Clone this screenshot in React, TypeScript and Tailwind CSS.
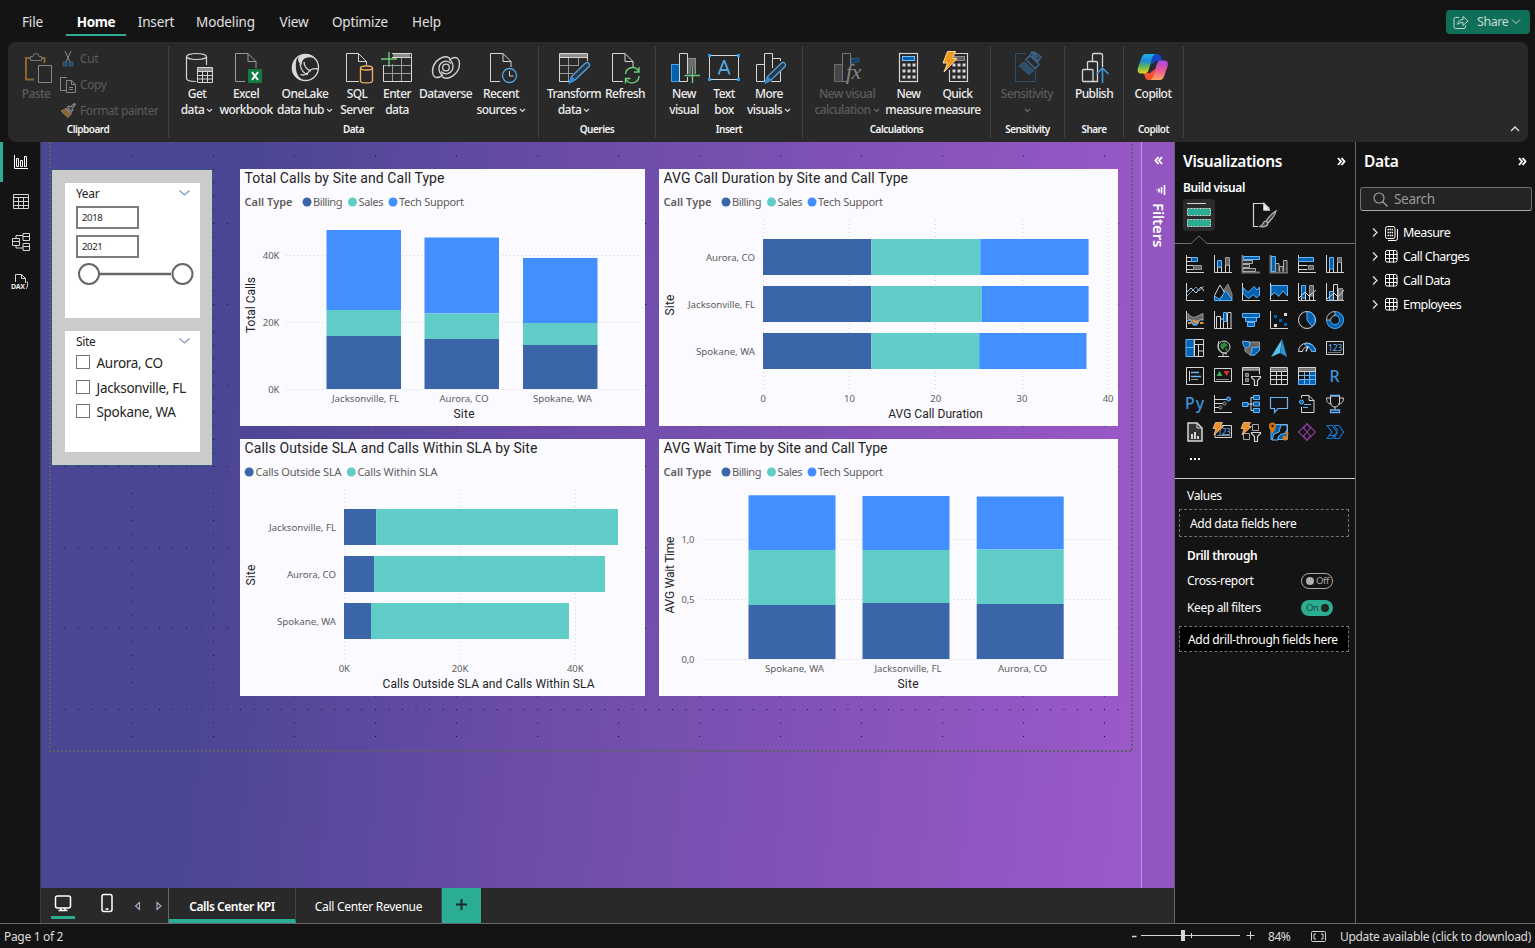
import React from "react";

type Kids = { children?: React.ReactNode };

/* ---------- icon helpers ---------- */

const Ic = ({ children, s = 32 }: Kids & { s?: number }) => (
  <svg width={s} height={s} viewBox={`0 0 ${s} ${s}`} fill="none" stroke="#d6d6d6" strokeWidth="1" className="block shrink-0 overflow-visible">
    {children}
  </svg>
);

const Caret = ({ c = "#d6d6d6" }: { c?: string }) => (
  <svg width="7" height="5" viewBox="0 0 7 5" fill="none" stroke={c} strokeWidth="1.2" className="ml-0.5 inline-block align-middle">
    <path d="M1 1l2.5 2.5L6 1" />
  </svg>
);

const icons = {
  paste: (
    <Ic>
      <path d="M14 27.500H6V6H10M21 6h3.500V11" stroke="#8a6530" strokeWidth="2" />
      <path d="M10.500 8.500V4.500h2.500a3 3 0 0 1 6 0h2.500v4z" stroke="#767676" />
      <path d="M18.500 13.500h13v17h-13z" stroke="#868686" />
    </Ic>
  ),
  getData: (
    <Ic>
      <ellipse cx="15.500" cy="4.500" rx="10" ry="3" strokeWidth="1.200" />
      <path d="M5.500 4.500v22c0 2 4 3 9.500 3M25.500 4.500V13" strokeWidth="1.200" />
      <path d="M17 17.500h14" strokeWidth="3" stroke="#8d8d8d" />
      <path d="M16.500 15.500h15v15h-15zM16.500 19.500h15M16.500 23.500h15M16.500 27h15M21.500 19v12M26.500 19v12" />
    </Ic>
  ),
  excel: (
    <Ic>
      <path d="M15 29.500H5.500V1.500H18l8 8V16M18 1.500V9.500H26" stroke="#9a9a9a" />
      <rect x="18" y="17" width="14" height="14" fill="#107c41" stroke="none" />
      <path d="M22 20l6 8M28 20l-6 8" stroke="#fff" strokeWidth="2" />
    </Ic>
  ),
  oneLake: (
    <Ic>
      <circle cx="16.500" cy="15.500" r="13" strokeWidth="1.300" />
      <path d="M8 6C2 11 1 19 6 24.500c3 3 6 4 9 4-4-2-6-4-7.500-8.500C6.500 15 6.500 11 8 6z" fill="#d9d9d9" stroke="none" />
      <path d="M9 6.500C13 1 21 1 25 6c-5-1.500-9-.5-11 2-1 1.500-1.500 3-1 5C10 12 9 9 9 6.500z" fill="#d9d9d9" stroke="none" />
      <path d="M11 12c1 6 3 9.500 8 10.500M29.500 17c-5-1-8 0-10 3-2 3-5 3.500-8 2.500M15 10c0 4 3 8 7 9" strokeWidth="1.300" />
    </Ic>
  ),
  sql: (
    <Ic>
      <path d="M18 29.500H5.500V1.500H17.500l8 8V13M17.500 1.500V9.500H25.500" />
      <ellipse cx="25.500" cy="16" rx="6" ry="2" stroke="#f5b267" strokeWidth="1.300" />
      <path d="M19.500 16v13c0 2.500 12 2.500 12 0V16" stroke="#f5b267" strokeWidth="1.300" />
    </Ic>
  ),
  enter: (
    <Ic>
      <path d="M12 3.500h17" strokeWidth="3" stroke="#8d8d8d" />
      <path d="M11 1.500h19.500v28h-28V13M11 5.500h19.500" />
      <path d="M3 13.500h27M3 21.500h27M11.500 12v17M20.500 6v23" stroke="#9a9a9a" />
      <path d="M0 7h16M8 0v15" stroke="#6ccb7a" strokeWidth="1.400" />
    </Ic>
  ),
  dataverse: (
    <Ic>
      <path d="M20 6.500C15 2 3 8 2.500 19c0 4 2 6.500 4.500 6.500 2 0 4-1 5.500-2.500" strokeWidth="1.400" />
      <path d="M12 24.500C17 29 29 23 29.500 12c0-4-2-6.500-4.500-6.500-2 0-4 1-5.500 2.500" strokeWidth="1.400" />
      <path d="M21 11.500c-5-5-12-1-12 5 0 4 2 6 4 7M11 19.500c5 5 12 1 12-5 0-4-2-6-4-7" strokeWidth="1.300" />
      <circle cx="16" cy="15.500" r="3.300" strokeWidth="1.300" />
    </Ic>
  ),
  recent: (
    <Ic>
      <path d="M15 29.500H5.500V1.500H18l8 8V15M18 1.500V9.500H26" />
      <circle cx="24.500" cy="23.500" r="7" stroke="#55a5e0" strokeWidth="1.300" fill="#292929" />
      <path d="M24.500 19v5h4" />
    </Ic>
  ),
  transform: (
    <Ic>
      <path d="M2 3.500h27" strokeWidth="3" stroke="#8d8d8d" />
      <path d="M13 29.500H1.500v-28h28V9M1.500 5.500h28" />
      <path d="M2 13.500h19M2 21.500h13M10.500 6v23M20.500 6v8" stroke="#9a9a9a" />
      <path d="M27.500 11a2.500 2.500 0 0 1 3.500 3.500L17 28l-5.500 3 2-6.500z" stroke="#55a5e0" strokeWidth="1.300" fill="#293746" />
      <path d="M14 25l3 3-5.500 3z" fill="#2f8be0" stroke="#2f8be0" />
    </Ic>
  ),
  refresh: (
    <Ic>
      <path d="M14 29.500H3.500V1.500H16l8 8V15M16 1.500V9.500H24" />
      <path d="M16.500 22a7 7 0 0 1 13-3M30 15v5h-5M30 24a7 7 0 0 1-13 3.500M16.500 31.500v-5h5" stroke="#6ccb7a" strokeWidth="1.400" />
    </Ic>
  ),
  newVisual: (
    <Ic>
      <rect x="19.500" y="6.500" width="8" height="18" fill="#6b6b6b" stroke="#8d8d8d" />
      <rect x="3.500" y="12.500" width="8" height="17" fill="#0063b1" stroke="#4ba0e8" />
      <path d="M11.500 29.500v-28h8v28z" fill="#292929" />
      <path d="M16.500 23.500h15.500M24.500 15v16" stroke="#292929" strokeWidth="3" />
      <path d="M16.500 23.500h15.500M24.500 15v16" stroke="#6ccb7a" strokeWidth="1.400" />
    </Ic>
  ),
  textBox: (
    <Ic>
      <path d="M1.500 3.500h29v24h-29z" />
      <path d="M0 2h3v3H0zM29 2h3v3h-3zM0 26h3v3H0zM29 26h3v3h-3z" fill="#2f9be8" stroke="none" />
      <path d="M10.500 22.500L15.800 9h.6l5.300 13.500M12.500 18h7.200" stroke="#55a5e0" strokeWidth="1.900" />
    </Ic>
  ),
  moreVisuals: (
    <Ic>
      <path d="M11.500 29.500v-17h-8v17h8zM11.500 12.500v-11h8V16M20 6.500h7.500V9M27.500 18v11.500H18" />
      <path d="M28.500 11a2.500 2.500 0 0 1 3.500 3.500L18 28l-5.500 3 2-6.500z" stroke="#55a5e0" strokeWidth="1.300" fill="#293746" />
      <path d="M15 25l3 3-5.500 3z" fill="#2f8be0" stroke="#2f8be0" />
    </Ic>
  ),
  newCalc: (
    <Ic>
      <rect x="3.500" y="12.500" width="8" height="17" fill="#464646" stroke="#6a6a6a" />
      <path d="M20.500 14V6.500H28V10h-4z" fill="#143e62" stroke="#2d597c" />
      <path d="M16 29.500h-4.500v-28h8v13" stroke="#777" />
      <text x="15" y="27" fill="#858585" stroke="none" className="text-[22px] italic" fontFamily="Liberation Serif, serif">fx</text>
    </Ic>
  ),
  newMeasure: (
    <Ic>
      <rect x="6.500" y="1.500" width="18" height="28" strokeWidth="1.200" />
      <rect x="9.500" y="4.500" width="12" height="4" fill="#0063b1" stroke="#7cbef5" />
      <path d="M9.500 13h13M9.500 19h13M9.500 25h13" strokeWidth="3" strokeDasharray="3 2" />
    </Ic>
  ),
  quick: (
    <Ic>
      <path d="M13 1.500h12.500v28h-18V18" strokeWidth="1.200" />
      <rect x="12.500" y="4.500" width="10" height="4" fill="#5d5d5d" stroke="#8d8d8d" />
      <path d="M10.500 13h13M10.500 19h13M10.500 25h13" strokeWidth="3" strokeDasharray="3 2" />
      <path d="M5.500-.500h8L10.500 6.500h4.500L2 20l3.500-9H1z" fill="#ee9a1c" stroke="#ffd9a0" />
    </Ic>
  ),
  sensitivity: (
    <Ic>
      <path d="M15 1.500H4.500v28h20V17" stroke="#2d516d" />
      <path d="M8 14l5-4.500 10 9-5 4.500z" fill="#2d4e68" stroke="#3a6487" strokeDasharray="2 1" />
      <path d="M15 7.500l4-4 9 9-4 4zM18 5l3-5 6 6M23 0l7 5-3 4-5-5z" stroke="#3a6487" strokeWidth="1.600" />
    </Ic>
  ),
  publish: (
    <Ic>
      <path d="M4.500 18.500q0-1 1-1h8.500q1 0 1 1v11H5.500q-1 0-1-1z" strokeWidth="1.300" />
      <path d="M9.500 17v-6.500q0-1 1-1h7.500q1.500 0 1.500 1v19H15M14.500 9V3q0-1.500 1.500-1.500h6.500q2 0 2 1.500v12" strokeWidth="1.300" />
      <path d="M24.500 31V16M18.500 22l6-6 6 6" stroke="#3f9fe0" strokeWidth="1.500" />
    </Ic>
  ),
  copilot: (
    <svg width="32" height="32" viewBox="0 0 32 32" className="block shrink-0">
      <defs>
        <linearGradient id="ca" x1="0" y1="0" x2="0" y2="1">
          <stop offset="0" stopColor="#19b5e8" />
          <stop offset=".35" stopColor="#1d86d8" />
          <stop offset=".65" stopColor="#5fb85c" />
          <stop offset="1" stopColor="#f2cf1b" />
        </linearGradient>
        <linearGradient id="cb" x1="0" y1="0" x2="0" y2="1">
          <stop offset="0" stopColor="#a348e8" />
          <stop offset=".5" stopColor="#ee5697" />
          <stop offset="1" stopColor="#fda45a" />
        </linearGradient>
      </defs>
      <path d="M14 2h6.500c2 0 3 1 3.500 3l1 4h-6L14 13z" fill="#1547c4" />
      <path d="M17 28h-5.500c-2 0-3-1-3.500-3l-1-4h6l5-4z" fill="#f0532d" />
      <path d="M9 2h9.500c-3 1-3.500 4-4.500 8l-2.500 8.500c-.8 2-2 3-4 3H4c-3 0-4-2.500-3-6l3-8.500c1-3 2-5 5-5z" fill="url(#ca)" />
      <path d="M22.500 28H13c3-1 3.500-4 4.500-8L20 11.500c.8-2 2-3 4-3h3.500c3 0 4 2.500 3 6L27.500 23c-1 3-2 5-5 5z" fill="url(#cb)" />
    </svg>
  ),
};

/* ---------- ribbon ---------- */

type ItemProps = { icon: React.ReactNode; w: string; a: string; b?: string; caret?: boolean; off?: boolean };

const Item = ({ icon, w, a, b, caret, off }: ItemProps) => (
  <div className={`flex shrink-0 flex-col items-center tracking-[-0.035em] ${w} ${off ? "text-[#5c5c5c]" : "text-[#ededed]"}`}>
    {icon}
    <div className="mt-[2px] whitespace-nowrap text-center text-[12px] leading-4 font-medium">
      <div>{a}</div>
      <div>
        {b}
        {caret && <Caret c={off ? "#6f6f6f" : "#d6d6d6"} />}
      </div>
    </div>
  </div>
);

const Group = ({ label, w, pad, children }: Kids & { label: string; w: string; pad: string }) => (
  <div className={`flex h-[92px] shrink-0 flex-col border-r border-[#404040] ${w}`}>
    <div className={`flex h-[75px] pt-[6px] ${pad}`}>{children}</div>
    <div className="text-center text-[10px] leading-[17px] font-semibold tracking-[-0.05em] text-[#f5f5f5]">{label}</div>
  </div>
);

const Small = ({ icon, t }: { icon: React.ReactNode; t: string }) => (
  <div className="flex h-[26px] shrink-0 items-center gap-1">
    {icon}
    <span className="text-[12px] leading-4 tracking-[-0.035em] text-[#5c5c5c]">{t}</span>
  </div>
);

const Ribbon = () => (
  <div className="mr-[7px] ml-2 flex h-[100px] rounded-lg bg-[#292929] pt-1">
    <Group label="Clipboard" w="w-[161px]" pad="pl-[12px]">
      <Item icon={icons.paste} w="w-[32px]" a="Paste" off />
      <div className="-mt-[6px] ml-2 flex flex-col">
        <Small
          t="Cut"
          icon={
            <svg width="16" height="18" viewBox="0 0 16 18" fill="none" stroke="#8a8a8a">
              <path d="M5 1l5 11M11 1L6 12" />
              <path d="M3.500 12.500h3v3h-3zM9.500 12.500h3v3h-3z" stroke="#2f5f85" strokeWidth="1.500" />
            </svg>
          }
        />
        <Small
          t="Copy"
          icon={
            <svg width="16" height="18" viewBox="0 0 16 18" fill="none" stroke="#868686">
              <path d="M6 14.500H.500V1.500H7M6.500 4.500h5l4 4v8h-9zM11.500 4.500v4h4M9 11.500h4M9 13.500h4" />
            </svg>
          }
        />
        <Small
          t="Format painter"
          icon={
            <svg width="16" height="16" viewBox="0 0 16 16" fill="none" stroke="#868686">
              <path d="M1 8l5-2.500 5.500 5L8 14.500z" fill="#8a6530" stroke="#8a7a60" />
              <path d="M7.500 4.500L9 3l1.500 1L14.500.500l1 1L12 5.500l1 1.500-1.500 1.500z M6 5.500l5.500 5" strokeWidth="1.200" />
            </svg>
          }
        />
      </div>
    </Group>
    <Group label="Data" w="w-[370px]" pad="pl-[6px]">
      <Item icon={icons.getData} w="w-[44px]" a="Get" b="data" caret />
      <Item icon={icons.excel} w="w-[54px]" a="Excel" b="workbook" />
      <Item icon={icons.oneLake} w="w-[64px]" a="OneLake" b="data hub" caret />
      <Item icon={icons.sql} w="w-[40px]" a="SQL" b="Server" />
      <Item icon={icons.enter} w="w-[40px]" a="Enter" b="data" />
      <Item icon={icons.dataverse} w="w-[57px]" a="Dataverse" />
      <Item icon={icons.recent} w="w-[54px]" a="Recent" b="sources" caret />
    </Group>
    <Group label="Queries" w="w-[117px]" pad="pl-[8px]">
      <Item icon={icons.transform} w="w-[54px]" a="Transform" b="data" caret />
      <Item icon={icons.refresh} w="w-[48px]" a="Refresh" />
    </Group>
    <Group label="Insert" w="w-[147px]" pad="pl-[8px]">
      <Item icon={icons.newVisual} w="w-[40px]" a="New" b="visual" />
      <Item icon={icons.textBox} w="w-[40px]" a="Text" b="box" />
      <Item icon={icons.moreVisuals} w="w-[50px]" a="More" b="visuals" caret />
    </Group>
    <Group label="Calculations" w="w-[188px]" pad="pl-[6px]">
      <Item icon={icons.newCalc} w="w-[76px]" a="New visual" b="calculation" caret off />
      <Item icon={icons.newMeasure} w="w-[47px]" a="New" b="measure" />
      <Item icon={icons.quick} w="w-[51px]" a="Quick" b="measure" />
    </Group>
    <Group label="Sensitivity" w="w-[74px]" pad="pl-[6px]">
      <Item icon={icons.sensitivity} w="w-[60px]" a="Sensitivity" caret off />
    </Group>
    <Group label="Share" w="w-[59px]" pad="justify-center">
      <Item icon={icons.publish} w="w-[50px]" a="Publish" />
    </Group>
    <Group label="Copilot" w="w-[60px]" pad="justify-center pr-px">
      <Item icon={icons.copilot} w="w-[50px]" a="Copilot" />
    </Group>
    <svg width="10" height="6" viewBox="0 0 10 6" fill="none" stroke="#e0e0e0" strokeWidth="1.300" className="mt-auto mr-[8px] mb-[10px] ml-auto">
      <path d="M1 5l4-4 4 4" />
    </svg>
  </div>
);

const menus: [string, string][] = [
  ["File", "w-[21px] ml-[22px]"],
  ["Home", "w-[60px] ml-[23px]"],
  ["Insert", "w-[34px] ml-[13px]"],
  ["Modeling", "w-[59px] ml-[23px]"],
  ["View", "w-[30px] ml-[24px]"],
  ["Optimize", "w-[56px] ml-[23px]"],
  ["Help", "w-[29px] ml-[24px]"],
];

const MenuBar = () => (
  <div className="flex h-[42px] items-start pt-[9px]">
    {menus.map(([t, c]) => (
      <div key={t} className={`flex h-[27px] justify-center whitespace-nowrap text-[13.5px] leading-[26px] ${c} ${t === "Home" ? "border-b-2 border-[#2bad93] font-bold text-white tracking-[-0.03em]" : "text-[#e0e0e0] tracking-[-0.01em]"}`}>
        {t}
      </div>
    ))}
    <div className="mt-px mr-[5px] ml-auto flex h-6 w-[84px] items-center rounded bg-[#0f6f59] pl-[7px] text-[12.5px] tracking-[-0.035em] text-[#c4d9d3]">
      <svg width="16" height="16" viewBox="0 0 16 16" fill="none" stroke="#c4d9d3" className="mr-2">
        <path d="M6 3.500H2.500q-1.500 0-1.500 1.500v8q0 1.500 1.500 1.500h8.500q1.500 0 1.500-1.500v-1.500" />
        <path d="M4.500 10.500C5 7.500 7 5.500 10 5.500V2.500l5 4.500-5 4.500V8.500c-2.500 0-4 .5-5.500 2z" />
      </svg>
      Share
      <svg width="10" height="6" viewBox="0 0 10 6" fill="none" stroke="#c4d9d3" className="ml-[3px]">
        <path d="M1 .500l4 4 4-4" />
      </svg>
    </div>
  </div>
);

/* ---------- left rail ---------- */

const Rail = () => (
  <div className="flex w-[41px] shrink-0 flex-col border-r border-[#3c3c3c]">
    <div className="flex h-10 items-center border-l-[3px] border-[#2bad93] pl-[10px]">
      <Ic s={16}>
        <path d="M1.500 1v13.500H15M3.500 4.500h2v8h-2zM7.500 6.500h2v6h-2zM11.500 2.500h2v10h-2z" stroke="#fff" />
      </Ic>
    </div>
    <div className="flex h-10 items-center pl-3">
      <Ic s={18}>
        <path d="M1.500 1.500h15v14h-15zM1.500 4.500h15M1.500 8.500h15M1.500 12.500h15M6.500 4v11M11.500 4v11" />
      </Ic>
    </div>
    <div className="flex h-10 items-center pl-3">
      <Ic s={18}>
        <path d="M.500 5.500h7v7h-7zM.500 8.500h7M11 .500h6.500v7H11zM11 3.500h6.500M11 10.500h6.500v7H11zM11 13.500h6.500M4 5.500v-3h7M4 12.500V15h7" />
      </Ic>
    </div>
    <div className="flex h-10 items-center pl-[11px]">
      <Ic s={18}>
        <path d="M4.500 9V1.500h6l4 4V10M10.500 1.500v4h4M16 8.500c1 2 1 5-1 7.500" />
        <text x="0" y="16" fill="#e8e8e8" stroke="none" className="text-[7px] font-bold" textLength="13.500">DAX</text>
      </Ic>
    </div>
  </div>
);

/* ---------- charts ---------- */

const BLUE = "#3a66a9";
const TEAL = "#5fccc8";
const SKY = "#438fff";
const GREY = "#5f5d5b";
const INK = "#252423";

type TxProps = { x: number; y: number; w?: number; s: number; t: string; f?: string; a?: "start" | "middle" | "end"; bold?: boolean; din?: boolean; rot?: boolean };

const Tx = ({ x, y, w, s, t, f = GREY, a = "start", bold, din, rot }: TxProps) => (
  <text
    x={x}
    y={y}
    fill={f}
    fontSize={s}
    textLength={w}
    textAnchor={a}
    fontWeight={bold ? 600 : 400}
    fontFamily={din ? "Roboto, sans-serif" : "'Noto Sans', sans-serif"}
    transform={rot ? `rotate(-90 ${x} ${y})` : undefined}
  >
    {t}
  </text>
);

const Legend = ({ x, y }: { x: number; y: number }) => (
  <g>
    <Tx x={x} y={y + 4} w={48} s={11} t="Call Type" bold />
    <circle cx={x + 62.500} cy={y} r="4.500" fill={BLUE} />
    <Tx x={x + 68.500} y={y + 4} w={29.500} s={11} t="Billing" />
    <circle cx={x + 108} cy={y} r="4.500" fill={TEAL} />
    <Tx x={x + 114} y={y + 4} w={25} s={11} t="Sales" />
    <circle cx={x + 148.500} cy={y} r="4.500" fill={SKY} />
    <Tx x={x + 154.500} y={y + 4} w={65} s={11} t="Tech Support" />
  </g>
);

const Grid = ({ d }: { d: string }) => <path d={d} stroke="#d4d4d8" strokeDasharray="1 3" fill="none" />;

const Card = ({ vb, h, children }: Kids & { vb: string; h: string }) => (
  <div className={`bg-[#fbfaff] tracking-normal ${h}`}>
    <svg viewBox={vb} className="block h-full w-full">
      {children}
    </svg>
  </div>
);

const Bars = ({ rows, colors }: { rows: number[][]; colors: string[] }) => (
  <>
    {rows.map(([y, ...xs]) =>
      colors.map((c, i) => <rect key={`${y}-${i}`} x={xs[i]} y={y} width={xs[i + 1] - xs[i]} height={36} fill={c} />),
    )}
  </>
);

const Cols = ({ cols, w }: { cols: number[][]; w: number }) => (
  <>
    {cols.map(([x, ...ys]) =>
      [SKY, TEAL, BLUE].map((c, i) => <rect key={`${x}-${i}`} x={x} y={ys[i]} width={w} height={ys[i + 1] - ys[i]} fill={c} />),
    )}
  </>
);

const JF = "Jacksonville, FL";
const AC = "Aurora, CO";
const SW = "Spokane, WA";

const Charts = () => (
  <div className="grid grid-cols-[405px_459px] gap-x-[14px] gap-y-[13px]">
    <Card vb="240 169 405 257" h="h-[257px]">
      <Tx x={244.500} y={183} w={200} s={14} t="Total Calls by Site and Call Type" f={INK} din />
      <Legend x={244.500} y={202} />
      <Grid d="M286 255.500H640M286 322.500H640M286 389.500H640" />
      <Cols w={74.500} cols={[[326.500, 230, 310, 336, 389], [424.500, 237.500, 313.500, 339, 389], [523, 258, 323, 345, 389]]} />
      <Tx x={279.500} y={259} s={9.500} t="40K" a="end" />
      <Tx x={279.500} y={326} s={9.500} t="20K" a="end" />
      <Tx x={279.500} y={393} s={9.500} t="0K" a="end" />
      <Tx x={365.500} y={402} w={67} s={9.700} t={JF} a="middle" />
      <Tx x={464} y={402} w={49} s={9.700} t={AC} a="middle" />
      <Tx x={562.500} y={402} w={59} s={9.700} t={SW} a="middle" />
      <Tx x={464} y={418} w={21} s={12} t="Site" f={INK} a="middle" din />
      <Tx x={255} y={305} w={56} s={12} t="Total Calls" f={INK} a="middle" din rot />
    </Card>
    <Card vb="659 169 459 257" h="h-[257px]">
      <Tx x={663.500} y={183} w={244.500} s={14} t="AVG Call Duration by Site and Call Type" f={INK} din />
      <Legend x={663.500} y={202} />
      <Grid d="M763.500 220V391M849.500 220V391M935.500 220V391M1022.500 220V391M1108.500 220V391" />
      <Bars colors={[BLUE, TEAL, SKY]} rows={[[239, 763, 871.300, 980.300, 1088.600], [286, 763, 871.300, 981.800, 1088.600], [333, 763, 871.300, 979.200, 1086.500]]} />
      <Tx x={755} y={261} w={49} s={9.700} t={AC} a="end" />
      <Tx x={755} y={308} w={67} s={9.700} t={JF} a="end" />
      <Tx x={755} y={355} w={59} s={9.700} t={SW} a="end" />
      {["0", "10", "20", "30", "40"].map((t, i) => (
        <Tx key={t} x={763.300 + i * 86.200} y={402} s={9.500} t={t} a="middle" />
      ))}
      <Tx x={935.500} y={418} w={94.500} s={12} t="AVG Call Duration" f={INK} a="middle" din />
      <Tx x={674} y={305} w={21} s={12} t="Site" f={INK} a="middle" din rot />
    </Card>
    <Card vb="240 439 405 257" h="h-[257px]">
      <Tx x={244.500} y={453} w={293} s={14} t="Calls Outside SLA and Calls Within SLA by Site" f={INK} din />
      <circle cx="249.200" cy="472" r="4.500" fill={BLUE} />
      <Tx x={255.500} y={476} w={86} s={11} t="Calls Outside SLA" />
      <circle cx="351.300" cy="472" r="4.500" fill={TEAL} />
      <Tx x={357.500} y={476} w={80} s={11} t="Calls Within SLA" />
      <Grid d="M344.500 490V661M459.500 490V661M575.500 490V661" />
      <Bars colors={[BLUE, TEAL]} rows={[[509, 344, 376.300, 618], [556, 344, 374.200, 605], [603, 344, 371, 569]]} />
      <Tx x={336} y={531} w={67} s={9.700} t={JF} a="end" />
      <Tx x={336} y={578} w={49} s={9.700} t={AC} a="end" />
      <Tx x={336} y={625} w={59} s={9.700} t={SW} a="end" />
      <Tx x={344.300} y={672} s={9.500} t="0K" a="middle" />
      <Tx x={460} y={672} s={9.500} t="20K" a="middle" />
      <Tx x={575.300} y={672} s={9.500} t="40K" a="middle" />
      <Tx x={488.500} y={688} w={212} s={12} t="Calls Outside SLA and Calls Within SLA" f={INK} a="middle" din />
      <Tx x={255} y={575} w={21} s={12} t="Site" f={INK} a="middle" din rot />
    </Card>
    <Card vb="659 439 459 257" h="h-[257px]">
      <Tx x={663.500} y={453} w={224} s={14} t="AVG Wait Time by Site and Call Type" f={INK} din />
      <Legend x={663.500} y={472} />
      <Grid d="M701 539.500H1113M701 599.500H1113M701 659.500H1113" />
      <Cols w={87} cols={[[748.500, 495.300, 550, 605, 659], [862.500, 496, 550, 603, 659], [976.700, 496.500, 549.500, 604, 659]]} />
      <Tx x={694.500} y={543} w={13} s={9.500} t="1,0" a="end" />
      <Tx x={694.500} y={603} w={13} s={9.500} t="0,5" a="end" />
      <Tx x={694.500} y={663} w={13} s={9.500} t="0,0" a="end" />
      <Tx x={794.500} y={672} w={59} s={9.700} t={SW} a="middle" />
      <Tx x={908} y={672} w={67} s={9.700} t={JF} a="middle" />
      <Tx x={1022.500} y={672} w={49} s={9.700} t={AC} a="middle" />
      <Tx x={908} y={688} w={21} s={12} t="Site" f={INK} a="middle" din />
      <Tx x={674} y={575} w={77} s={12} t="AVG Wait Time" f={INK} a="middle" din rot />
    </Card>
  </div>
);

const SlicerHead = ({ t }: { t: string }) => (
  <div className="flex items-center justify-between pr-[10px] text-[12px] leading-[18px] text-[#252423]">
    {t}
    <svg width="11" height="6" viewBox="0 0 11 6" fill="none" stroke="#7c9bb5" strokeWidth="1.200" className="mb-[3px]">
      <path d="M.500.500l5 4.500 5-4.500" />
    </svg>
  </div>
);

const Slicers = () => (
  <div className="flex h-[295px] w-[160px] flex-col gap-[13px] bg-[#cbcbcb] pt-[13px] pr-[12px] pl-[13px] outline outline-[#35567d]">
    <div className="flex h-[135px] flex-col bg-white pt-[2px] pl-[11px]">
      <SlicerHead t="Year" />
      <div className="mt-[3px] h-[23px] w-[63px] border-2 border-[#7d7d7d] pl-[4px] text-[9.5px] leading-[20px] text-[#252423]">2018</div>
      <div className="mt-[6px] h-[23px] w-[63px] border-2 border-[#7d7d7d] pl-[4px] text-[9.5px] leading-[20px] text-[#252423]">2021</div>
      <svg width="119" height="24" viewBox="0 0 119 24" fill="#fff" stroke="#666" strokeWidth="2" className="mt-[4px] ml-px">
        <path d="M22 12h72" strokeWidth="2.500" />
        <circle cx="12" cy="12" r="10" />
        <circle cx="105.500" cy="12" r="10" />
      </svg>
    </div>
    <div className="flex h-[121px] flex-col bg-white pt-[2px] pl-[11px]">
      <SlicerHead t="Site" />
      {[AC, JF, SW].map((t) => (
        <div key={t} className="flex h-[24.500px] items-center whitespace-nowrap text-[13.5px] tracking-[-0.022em] text-[#252423]">
          <span className="mr-[6.500px] -mt-[2px] h-[14px] w-[14px] shrink-0 border border-[#777]" />
          {t}
        </div>
      ))}
    </div>
  </div>
);

const vLines = Array.from({ length: 13 }, (_, i) => 132.500 + i * 81);
const hLines = Array.from({ length: 7 }, (_, i) => 223.500 + i * 81);

const Canvas = () => (
  <div className="relative h-[746px] w-[1100px] shrink-0 bg-[linear-gradient(96deg,#4b4694_0%,#4b4694_18%,#6a4ba8_45%,#7550af_58%,#8b54bd_80%,#9d59ca_100%)]">
    <svg width="1100" height="746" viewBox="41 142 1100 746" className="absolute inset-0" fill="none">
      {vLines.map((x) => (
        <path key={x} d={`M${x} 155.500V740`} stroke="#161630" strokeDasharray="1 12.500" />
      ))}
      {hLines.map((y) => (
        <path key={y} d={`M64.500 ${y}H1125`} stroke="#161630" strokeDasharray="1 12.500" />
      ))}
      <path d="M50 142V751H1132V142" stroke="#5f5f66" strokeWidth="2" strokeDasharray="2 2" />
    </svg>
    <div className="relative flex gap-[28px] pt-[27px] pl-[11px]">
      <div className="pt-px"><Slicers /></div>
      <Charts />
    </div>
  </div>
);

const Filters = () => (
  <div className="flex h-[746px] w-[33px] shrink-0 flex-col items-center border-l border-[#b9a2cc] bg-[#9356c0] pt-[14px]">
    <svg width="9" height="9" viewBox="0 0 9 9" fill="none" stroke="#fff" strokeWidth="1.900">
      <path d="M4.500 1L1.500 4.500 4.500 8M8 1L5 4.500 8 8" />
    </svg>
    <svg width="10" height="10" viewBox="0 0 10 10" fill="none" stroke="#fff" strokeWidth="1.600" className="mt-[20px] ml-[6px]">
      <path d="M8.500 0v10M5.500 2v6.500M3 3.500v4M1 4.500v1" />
    </svg>
    <div className="mt-[8px] ml-px text-[15px] leading-[18px] font-semibold tracking-[-0.01em] text-white [writing-mode:vertical-rl]">Filters</div>
  </div>
);

const PageTabs = () => (
  <div className="flex h-[35px] bg-[#292929]">
    <div className="flex w-[128px] items-start border-r border-[#666] pl-[10px]">
      <div className="flex h-[31px] w-[24px] flex-col items-center justify-between border-b-[3px] border-[#2bad93] pt-[7px]">
        <svg width="18" height="17" viewBox="0 0 18 17" fill="none" stroke="#fff" strokeWidth="1.500">
          <rect x="1.500" y="1" width="15" height="12" rx="2" />
          <path d="M4.500 15.500h9M7 13v2.500M11 13v2.500" />
        </svg>
      </div>
      <svg width="12" height="20" viewBox="0 0 12 20" fill="none" stroke="#fff" strokeWidth="1.500" className="mt-[5px] ml-[26px]">
        <rect x="1" y="1.500" width="10" height="17" rx="2" />
        <path d="M4.500 16h3" />
      </svg>
      <svg width="28" height="10" viewBox="0 0 28 10" fill="none" stroke="#b5a9c9" strokeWidth="1.100" className="mt-[13px] ml-[21px]">
        <path d="M5.500 1.500L1.500 5l4 3.500zM23 1.500L27 5l-4 3.500z" />
      </svg>
    </div>
    <div className="flex w-[127px] items-center justify-center border-r border-b-4 border-r-[#444] border-b-[#2bad93] pt-[6px] text-[12px] font-semibold tracking-[-0.038em] text-white">Calls Center KPI</div>
    <div className="flex w-[146px] items-center justify-center border-r border-[#444] pt-[3px] text-[12px] tracking-[-0.025em] text-white">Call Center Revenue</div>
    <div className="flex w-[39px] items-center justify-center bg-[#2bad93]">
      <svg width="11" height="11" viewBox="0 0 11 11" stroke="#1c2b28" strokeWidth="2" className="-mt-[2px]">
        <path d="M5.500 0v11M0 5.500h11" />
      </svg>
    </div>
  </div>
);

/* ---------- visualizations pane ---------- */

const B = "#0063b1";
const L = "#69b4f5";
const G = "#666";
const W = "#d6d6d6";

const V = ({ children }: Kids) => (
  <div className="flex h-7 w-7 items-center justify-center">
    <svg width="18" height="18" viewBox="0 0 18 18" fill="none" stroke={W} className="overflow-visible">
      {children}
    </svg>
  </div>
);

const Axes = () => <path d="M.500 0v17.500H18" />;
const Bolt = () => <path d="M1.500-.5h7l-2 4h3L0 12l2-6.500h-3z" fill="#e8912d" stroke="#fbd7a5" strokeWidth=".7" />;
const Funnel = () => <path d="M9.500 9.500h9v1l-3 3v5h-3v-5l-3-3z" fill="#141414" strokeWidth="1.200" />;

const vizIcons: React.ReactNode[] = [
  <><Axes /><path d="M.500 2.500h5M.500 6.500h5M.500 10.500h7M.500 14.500h7" /><path d="M5.500 2.500h6v4h-6z" fill={B} stroke={L} /><path d="M7.500 10.500h8v4h-8z" fill={G} stroke="#999" /></>,
  <><Axes /><path d="M3.500 17v-5h4v5M11.500 17v-7h4v7" /><path d="M3.500 5.500h4v6.500h-4z" fill={B} stroke={L} /><path d="M11.500 2.500h4v7.500h-4z" fill={G} stroke="#999" /></>,
  <><path d="M.500 0v17.500H18" stroke="#777" strokeWidth="2" /><path d="M1.500 1.500h16v3h-16z" fill={B} stroke={L} /><path d="M1 5.500h9.500v3H1M1 9.500h6.500v3H1M1 13.500h12.500v3H1z" stroke="#aaa" fill="#333" /></>,
  <><path d="M.500 0v17.500H18" stroke="#777" strokeWidth="2" /><path d="M1.500 1.500h4v15h-4z" fill={B} stroke={L} /><path d="M5.500 16.500V8.500h3.500v8M9.500 16.500v-5h3.500v5M13.500 16.500v-11h3.500v11" stroke="#aaa" fill="#333" /></>,
  <><Axes /><path d="M.500 10.500h9M.500 14.500h9" /><path d="M.500 2.500h15v4h-15z" fill={B} stroke={L} /><path d="M10.500 10.500h5v4h-5z" fill={G} stroke="#999" /></>,
  <><Axes /><path d="M3.500 2.500h4v11.500h-4z" fill={B} stroke={L} /><path d="M3.500 14v3M7.500 14v3M11.500 17V7M15.500 7v10" /><path d="M11.500 2.500h4v5h-4z" fill={G} stroke="#999" /></>,
  <><Axes /><path d="M1 13l9-9 3 4 5-5" stroke="#4a9fe0" /><path d="M1 9l4-4L10 10l5-6 3 4" /></>,
  <><path d="M9 8L14 1l4 10v6.500z" fill={G} stroke="#888" /><path d="M.500 12.500L6 2l5 8-6 7H.500z" /><path d="M.500 13l5.500 3.500L11.500 7.500l6 8v2H.500z" fill={B} stroke={L} /></>,
  <><Axes /><path d="M1 4.500l5 5 6-6 3 3.500 2.500-3v8l-3 3-3-3.500-5 4-5.500-5z" fill={B} stroke={L} /></>,
  <><Axes /><path d="M1 2.500h16.500V13l-4.500-5-4.500 5.500-3.500-4-4 3z" fill={B} stroke={L} /></>,
  <><Axes /><path d="M3.500 2.500h4V15h-4z" fill={B} stroke={L} /><path d="M11.500 2.500h4V13h-4z" fill={G} stroke="#999" /><path d="M1 15l6-6 4 4 7-6M3.500 15v2M7.500 11v6M11.500 13v4M15.500 10v7" /></>,
  <><Axes /><path d="M3.500 8.500h4V17h-4z" fill={B} stroke={L} /><path d="M12.500 5.500h4V17h-4z" fill={G} stroke="#999" /><path d="M7.500 17V1.500h4V17M1 16l7-6 4 4 6-7" /></>,
  <><path d="M1 10q4-3 5 2 3 4 6 0 1-5 5.500-3" fill={B} stroke={L} strokeWidth="1.500" /><path d="M2 2.500q4 5 7.500 3.500T17 2.500v6q-4-1-6 3-2 1-3.500 0Q5 7 2 8z" fill={G} stroke="#999" /><path d="M2 12h3M14 12h3.500M7 9l3 2.500 2-2" stroke="#e8912d" strokeWidth="2.200" /><Axes /></>,
  <><Axes /><path d="M2.500 17V5.500H6.500V17M6.500 5.500V8H9.500V17M6.500 17V8" /><path d="M9.500 10.500V1.500H12.500v9z" fill={B} stroke={L} /><path d="M13.500 1.500H17V17M13.500 2v15" /></>,
  <><path d="M.500 2.500h17v4H.500zM3.500 6.500h11v4h-11zM5.500 11.500h7v4h-7z" fill={B} stroke={L} /></>,
  <><Axes /><path d="M4 4h3v3H4zM9 8h3v3H9zM14 12h3v3h-3z" fill={B} stroke="none" /><path d="M14 2h3v3h-3zM4 13h3v3H4z" fill={W} stroke="none" /></>,
  <><circle cx="9" cy="9" r="8.500" /><path d="M9 .500a8.500 8.500 0 0 1 5 15L9 9z" fill={B} stroke={L} /></>,
  <><circle cx="9" cy="9" r="6.500" stroke={L} strokeWidth="5" /><circle cx="9" cy="9" r="6.500" stroke={B} strokeWidth="3.400" /><path d="M2.500 9A6.500 6.500 0 0 1 9 2.500" stroke="#141414" strokeWidth="5" /><path d="M.500 9A8.500 8.500 0 0 1 9 .500v4A4.500 4.500 0 0 0 4.500 9z" stroke="#aaa" /></>,
  <><path d="M0 .500h8v17H0zM0 8.500h8" fill={B} stroke={L} /><path d="M8.500.500h9v17h-9zM8.500 5.500h9M12.500 5.500v12M12.500 12h5" /></>,
  <><circle cx="10" cy="8" r="6" stroke={W} /><path d="M7 5l4-2 3 4-3 1-2 3-3-3zM11 9l3 1-2 3z" fill="#2d8a3e" stroke="none" /><path d="M5 2a9 9 0 0 0 8 13M9 15v2.500M4 17.500h11" /></>,
  <><path d="M3 3h14.500v8l-5 5H8l-5-4z" fill={G} stroke="#999" /><path d="M.500 2l7 1v4l-3 2-3-2z" fill={B} stroke={L} /><path d="M10 8.500l7.500-.5v3.500l-5 4.500H8l2-4z" fill={B} stroke={L} /></>,
  <><path d="M12 0L1 18l9-4z" fill="#5cc0ee" stroke="none" /><path d="M12 0l5 18-7-4z" fill="#2f8fc7" stroke="none" /></>,
  <><path d="M.500 12.500a8.500 8.500 0 0 1 17 0h-4a4.500 4.500 0 0 0-9 0z" stroke={W} /><path d="M6 5a8.500 8.500 0 0 1 11.500 7.500h-4A4.500 4.500 0 0 0 11 9z" fill={B} stroke={L} /><path d="M8 12.500L10 7" strokeWidth="1.500" /></>,
  <><path d="M.500 2.500h17v13H.500z" /><path d="M2 13.500h13" stroke="#777" /><text x="2" y="11.500" fill={L} stroke="none" className="text-[8.5px]" textLength="14">123</text></>,
  <><path d="M.500.500h17v17H.500zM3.500 4v10" /><path d="M5 5.500h8M5 9.500h10" stroke={L} strokeWidth="1.600" /><path d="M5 12.500h7" stroke="#999" /></>,
  <><path d="M.500 1.500h17v13H.500z" /><path d="M2.500 9l3-5 3 5z" fill="#3fae4e" stroke="none" /><path d="M9.500 4h6l-3 5z" fill="#e0322b" stroke="none" /><path d="M2 12.500h13" stroke="#888" /></>,
  <><path d="M8 17.500H.500V.500h17v7" /><path d="M1 2.500h16" stroke="#999" strokeWidth="2.500" /><path d="M3.500 6.500h3v3h-3zM3.500 11.500h3v3h-3z" stroke="#999" fill={G} /><Funnel /></>,
  <><path d="M1 2.500h16" stroke="#888" strokeWidth="2.500" /><path d="M.500.500h17v17H.500zM.500 4.500h17M.500 8.500h17M.500 12.500h17M6.500 4v13M11.500 4v13" /></>,
  <><path d="M6 12h6v5.500H0V13h6zM12 4.500h5.500v13H12z" fill={B} stroke="none" /><path d="M1 2.500h16" stroke="#888" strokeWidth="2.500" /><path d="M.500.500h17v17H.500zM.500 4.500h17M.500 8.500h17M.500 12.500h17M6.500 4v13M11.500 4v13" stroke={L} /><path d="M.500 12V.500h17v4H.500" /></>,
  <text x="3.500" y="15" fill="#3a96dd" stroke="none" className="text-[16px] font-medium" textLength="9">R</text>,
  <text x="-1" y="14" fill="#3a96dd" stroke="none" className="text-[16px] font-medium" textLength="19">Py</text>,
  <><Axes /><path d="M1 4.500h12M1 8.500h8M1 12.500h4" /><circle cx="14.500" cy="4" r="2" fill={B} stroke={L} /><circle cx="10.500" cy="8.500" r="1.500" stroke="#aaa" /><circle cx="6.500" cy="12.500" r="1.500" stroke="#aaa" /></>,
  <><path d="M6 9h3M9 2.500v13M9 2.500h2.500M9 9h2.500M9 15.500h2.500" /><path d="M.500 7.500h5.500v4H.500zM11.500.500h6v4h-6zM11.500 7h6v4h-6zM11.500 13.500h6v4h-6z" fill={B} stroke={L} /></>,
  <path d="M.500 2.500h17v11H8l-3.500 4v-4h-4z" stroke={L} strokeWidth="1.200" />,
  <><path d="M3.500 3V.500H11l5 5v12H3.500V12M11 .500v5h5" /><circle cx="3.500" cy="7" r="2" fill={B} stroke={L} /><path d="M6 9.500h7M5 12.500h5" stroke={L} /></>,
  <><path d="M4.500 1v6c0 3 2 5 4.500 5s4.500-2 4.500-5V1zM4.500 3h-4c0 4 2 6 5 6M13.500 3h4c0 4-2 6-5 6M9 12v3" /><path d="M4 .500h10M4.500 17.500h9v-2.500h-9z" stroke={L} strokeWidth="1.300" /></>,
  <><path d="M2 0h9l5 5v13H2z" fill="#333" strokeWidth="1.500" /><path d="M11 0v5h5" /><path d="M6 16v-5M9 16V9M12 16v-3" strokeWidth="2" /></>,
  <><path d="M8 2.500h9.500v12H1V10" /><path d="M3 12.500h13" stroke="#888" /><text x="3.500" y="11.500" fill={L} stroke="none" className="text-[8.5px]" textLength="13">123</text><Bolt /></>,
  <><path d="M10.500 1.500h6v6h-6zM1.500 10.500h6v6h-6z" stroke="#aaa" /><Funnel /><Bolt /></>,
  <><path d="M1 1.500h16.500v15H1z" stroke={L} fill={B} /><path d="M11 2h6v5l-3 4h-3l-3 3v3H2l2-6 5-2z" fill="#141414" stroke={L} /><path d="M2.500 11C-.500 6-1 5-1 3a3.500 3.500 0 0 1 7 0c0 2-1 4-3.500 8z" fill="#d9730d" stroke="none" /><circle cx="2.500" cy="3" r="1.200" fill="#141414" stroke="none" /><circle cx="15" cy="15" r="2.500" fill="#e07b12" stroke="none" /><circle cx="17" cy="10.500" r="1.500" fill="#e07b12" stroke="none" /></>,
  <><path d="M9 .500L17.500 9 9 17.500.500 9z" stroke="#8a3a96" strokeWidth="1.200" /><path d="M5 5l8 8M13 5l-4 4-4 4M9 1L6 5l3 4 3-4zM9 9l-3 4 3 4 3-4z" stroke="#8a3a96" /></>,
  <path d="M1 2.500h5l5 6.500-5 6.500H1L6 9zM8 2.500h5L17.500 9 13 15.500H8M11.500 9L8 15.500M8 2.500l4 5M3.500 12.500h5" stroke="#1472c9" strokeWidth="1.200" />,
];

const Chevrons = () => (
  <svg width="9" height="9" viewBox="0 0 9 9" fill="none" stroke="#fff" strokeWidth="1.900">
    <path d="M1 1l3 3.500L1 8M4.500 1l3 3.500-3 3.500" />
  </svg>
);

const Visualizations = () => (
  <div className="flex w-[182px] shrink-0 flex-col border-x border-[#666] text-[12px] text-white">
    <div className="flex h-[39px] items-center justify-between pr-[9px] pl-2 text-[15.500px] font-semibold tracking-[-0.022em]">
      Visualizations
      <Chevrons />
    </div>
    <div className="-mt-px h-[19px] pl-2 leading-[16px] font-semibold tracking-[-0.035em]">Build visual</div>
    <div className="flex h-[32px] gap-[38px] pl-2">
      <div className="flex h-8 w-8 items-center justify-center rounded-sm bg-[#2b2b2b]">
        <svg width="26" height="26" viewBox="0 0 26 26" fill="none">
          <path d="M1 1.500h19" stroke="#d6d6d6" />
          <path d="M1.500 6.500h23v7h-23zM1.500 17.500h23v7h-23z" fill="#2bad93" stroke="#d6d6d6" strokeDasharray="2 1" />
        </svg>
      </div>
      <svg width="26" height="28" viewBox="0 0 26 28" fill="none" stroke="#d6d6d6" strokeWidth="1.200" className="mt-[3px] -ml-px">
        <path d="M6 24.500H1.500V1.500H12L17 6v3M12 1.500V8h5" />
        <path d="M12 1.500V8h5z" fill="#fff" />
        <path d="M24 9c-5 3-8 7-10 10l2 2c4-4 7-7 8-12zM14 19c-3 0-3 3-4 4-1 1.500-3 1.500-3 1.500 5 1 9 0 9-3.500" stroke="#b8b8b8" fill="#444" />
      </svg>
    </div>
    <svg width="180" height="13" viewBox="0 0 180 13" fill="none" stroke="#707070" className="block shrink-0">
      <path d="M0 12.500H16L24 5l8 7.500H180" />
    </svg>
    <div className="mt-[6px] ml-[6px] grid [grid-template-columns:repeat(6,28px)]">
      {vizIcons.map((c, i) => (
        <V key={i}>{c}</V>
      ))}
    </div>
    <div className="flex h-[33px] gap-[2px] border-b border-[#ccc] pt-[12px] pl-[15px]">
      <i className="h-[2px] w-[2px] bg-white" />
      <i className="h-[2px] w-[2px] bg-white" />
      <i className="h-[2px] w-[2px] bg-white" />
    </div>
    <div className="mt-[9px] pl-3 leading-[16px]">Values</div>
    <div className="mx-1 mt-[5px] mr-[6px] flex h-[28px] items-center border border-dashed border-[#707070] pt-px pl-[10px]">Add data fields here</div>
    <div className="mt-[11px] pl-3 leading-[16px] font-semibold tracking-[-0.03em]">Drill through</div>
    <div className="mt-[9px] flex h-[16px] items-center justify-between pr-[22px] pl-3">
      Cross-report
      <span className="flex h-4 w-8 items-center gap-[2px] rounded-full border border-[#aaa] pl-1 text-[9.5px] tracking-[-0.035em] text-[#aaa]">
        <i className="h-2 w-2 rounded-full bg-[#b0b0b0]" />
        Off
      </span>
    </div>
    <div className="mt-[11px] flex h-[16px] items-center justify-between pr-[22px] pl-3 tracking-[-0.03em]">
      Keep all filters
      <span className="flex h-4 w-8 items-center gap-[2px] rounded-full bg-[#2bad93] pl-[5px] text-[9.5px] tracking-[-0.035em] text-[#1f4a41]">
        On
        <i className="h-2 w-2 rounded-full bg-[#242424]" />
      </span>
    </div>
    <div className="mx-1 mt-[10px] mr-[6px] flex h-[26px] items-center border border-dashed border-[#707070] bg-black pt-px pl-[8px] whitespace-nowrap">Add drill-through fields here</div>
  </div>
);

const DataPane = () => (
  <div className="flex min-w-0 flex-1 flex-col text-[12.5px] text-white">
    <div className="flex h-[39px] items-center justify-between pr-[8px] pl-2 text-[15.500px] font-semibold">
      Data
      <Chevrons />
    </div>
    <div className="mt-[6px] mr-[3px] ml-[4px] flex h-[24px] items-center rounded-[3px] border border-[#707070] border-b-[#aaa] bg-[#242424] pl-3 text-[13.500px] text-[#999]">
      <svg width="15" height="15" viewBox="0 0 15 15" fill="none" stroke="#aaa" strokeWidth="1.100" className="mr-[6px]">
        <circle cx="6" cy="6" r="5" />
        <path d="M9.500 9.500l5 5" />
      </svg>
      Search
    </div>
    <div className="mt-[10px] flex flex-col tracking-[-0.045em]">
      {["Measure", "Call Charges", "Call Data", "Employees"].map((t, i) => (
        <div key={t} className="flex h-[24px] items-center pl-[16px]">
          <svg width="6" height="9" viewBox="0 0 6 9" fill="none" stroke="#e8e8e8" strokeWidth="1.200" className="mr-[7px] -mt-px">
            <path d="M1 .500l4 4-4 4" />
          </svg>
          {i === 0 ? (
            <svg width="13" height="15" viewBox="0 0 13 15" fill="none" stroke="#fff" className="mr-[5px]">
              <rect x=".5" y=".5" width="9.500" height="12" rx="2" />
              <path d="M3 14.500h7.500q2 0 2-2V3" />
              <path d="M2.500 3.500h5.500M2.500 6.500h5.500M2.500 9.500h5.500" strokeDasharray="1.500 .6" strokeWidth="1.300" />
            </svg>
          ) : (
            <svg width="13" height="13" viewBox="0 0 13 13" fill="none" stroke="#fff" className="mr-[5px] -mt-px">
              <rect x=".5" y=".5" width="11.500" height="11.500" rx="1.500" />
              <path d="M.500 4.500h12M.500 8.500h12M4.500.500v12M8.500.500v12" />
            </svg>
          )}
          {t}
        </div>
      ))}
    </div>
  </div>
);

const StatusBar = () => (
  <div className="flex h-[25px] items-center border-t border-[#666] pt-px pl-1 text-[12px] whitespace-nowrap text-[#dcdcdc]">
    <span className="mt-px">Page 1 of 2</span>
    <svg width="125" height="12" viewBox="0 0 125 12" fill="none" stroke="#d6d6d6" className="mb-px ml-auto">
      <path d="M0 6.500h4.500" strokeWidth="1.500" />
      <path d="M9 5.500h99M59.500 3v5M114.500 5.500h8M118.500 1.500v8" />
      <path d="M49 0h4v11h-4z" fill="#d6d6d6" stroke="none" />
    </svg>
    <span className="ml-[11px] w-[43px] tracking-[-0.04em]">84%</span>
    <svg width="15" height="11" viewBox="0 0 15 11" fill="none" stroke="#d6d6d6">
      <rect x=".5" y=".5" width="14" height="10" rx="1" />
      <path d="M5 3H3v5h2M10 3h2v5h-2" />
    </svg>
    <span className="mt-px mr-[3px] ml-[14px] w-[192px] tracking-[-0.026em]">Update available (click to download)</span>
  </div>
);

export default function App() {
  return (
    <div className="flex h-[948px] w-[1535px] flex-col overflow-hidden bg-[#141414] font-['Noto_Sans',sans-serif] tracking-[-0.02em]">
      <MenuBar />
      <Ribbon />
      <div className="flex h-[781px]">
        <Rail />
        <div className="flex w-[1133px] shrink-0 flex-col">
          <div className="flex h-[746px]">
            <Canvas />
            <Filters />
          </div>
          <PageTabs />
        </div>
        <Visualizations />
        <DataPane />
      </div>
      <StatusBar />
    </div>
  );
}
